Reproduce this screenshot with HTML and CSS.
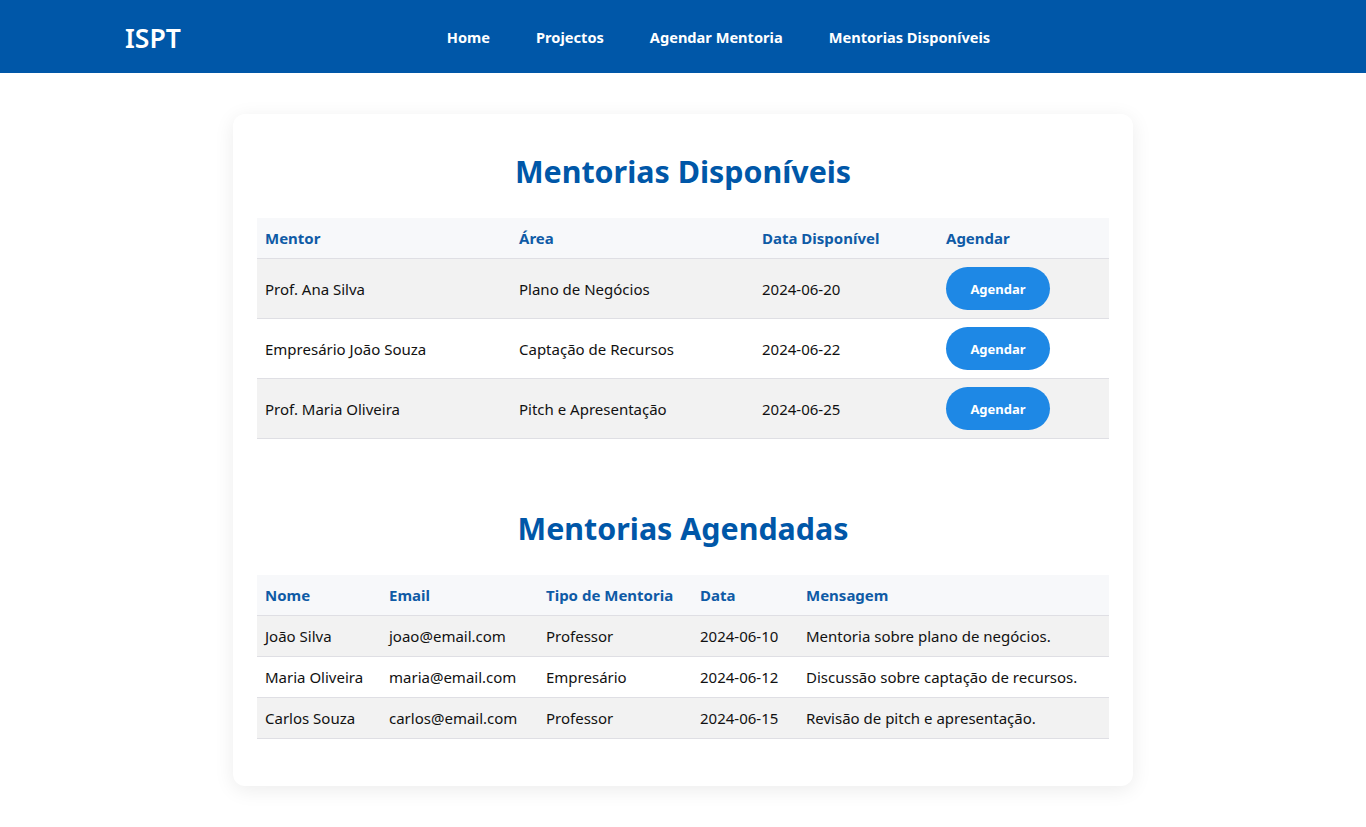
FILE: index.html
```html
<!DOCTYPE html>
<html lang="pt">
<head>
<meta charset="utf-8">
<title>ISPT - Mentorias Disponíveis</title>
<link rel="stylesheet" href="styles.css">
</head>
<body>
<header class="topbar">
  <div class="topbar-inner">
    <div class="logo">ISPT</div>
    <nav class="nav">
      <a href="#">Home</a>
      <a href="#">Projectos</a>
      <a href="#">Agendar Mentoria</a>
      <a href="#">Mentorias Disponíveis</a>
    </nav>
  </div>
</header>
<main class="page">
  <div class="card">
    <section class="section">
      <h2 class="title">Mentorias Disponíveis</h2>
      <table class="tbl tbl-avail">
        <colgroup><col class="c1"><col class="c2"><col class="c3"><col class="c4"></colgroup>
        <thead><tr><th>Mentor</th><th>Área</th><th>Data Disponível</th><th>Agendar</th></tr></thead>
        <tbody>
          <tr><td>Prof. Ana Silva</td><td>Plano de Negócios</td><td>2024-06-20</td><td><button class="btn">Agendar</button></td></tr>
          <tr><td>Empresário João Souza</td><td>Captação de Recursos</td><td>2024-06-22</td><td><button class="btn">Agendar</button></td></tr>
          <tr><td>Prof. Maria Oliveira</td><td>Pitch e Apresentação</td><td>2024-06-25</td><td><button class="btn">Agendar</button></td></tr>
        </tbody>
      </table>
    </section>
    <section class="section">
      <h2 class="title">Mentorias Agendadas</h2>
      <table class="tbl tbl-booked">
        <colgroup><col class="d1"><col class="d2"><col class="d3"><col class="d4"><col class="d5"></colgroup>
        <thead><tr><th>Nome</th><th>Email</th><th>Tipo de Mentoria</th><th>Data</th><th>Mensagem</th></tr></thead>
        <tbody>
          <tr><td>João Silva</td><td>joao@email.com</td><td>Professor</td><td>2024-06-10</td><td>Mentoria sobre plano de negócios.</td></tr>
          <tr><td>Maria Oliveira</td><td>maria@email.com</td><td>Empresário</td><td>2024-06-12</td><td>Discussão sobre captação de recursos.</td></tr>
          <tr><td>Carlos Souza</td><td>carlos@email.com</td><td>Professor</td><td>2024-06-15</td><td>Revisão de pitch e apresentação.</td></tr>
        </tbody>
      </table>
    </section>
  </div>
</main>
</body>
</html>
```
FILE: styles.css
```css
* { box-sizing: border-box; }
html, body {
  margin: 0;
  padding: 0;
  background: #ffffff;
  font-family: "Noto Sans", "Open Sans", sans-serif;
  color: #111;
}
.topbar {
  background: #0057a8;
  height: 73px;
}
.topbar-inner {
  height: 100%;
  padding: 0 125px;
  display: flex;
  align-items: center;
}
.logo {
  color: #fff;
  font-size: 26.5px;
  font-weight: 600;
  line-height: 1;
  width: 55px;
  padding-top: 3px;
}
.nav {
  flex: 1;
  display: flex;
  justify-content: center;
  gap: 46px;
  padding-left: 16px;
}
.nav a {
  color: #fff;
  text-decoration: none;
  font-weight: 700;
  font-size: 14.6px;
}
.page {
  padding: 41px 0 40px;
  display: flex;
  justify-content: center;
}
.card {
  width: 900px;
  background: #fff;
  border-radius: 12px;
  box-shadow: 0 4px 20px rgba(0, 0, 0, 0.08);
  padding: 24px;
}
.section { margin-bottom: 70px; }
.section:last-child { margin-bottom: 23px; }
.title {
  margin: 14px 0 26px;
  text-align: center;
  color: #0057a8;
  font-size: 30.4px;
  line-height: 40px;
  font-weight: 700;
}
.tbl {
  width: 100%;
  border-collapse: collapse;
  table-layout: fixed;
  font-size: 15px;
}
.tbl th {
  text-align: left;
  background: #f7f8fa;
  color: #0f5ba6;
  font-weight: 700;
  padding: 10px 8px;
  line-height: 20px;
  border-bottom: 1px solid #dfdfe4;
}
.tbl td {
  padding: 10px 8px;
  line-height: 20px;
  border-bottom: 1px solid #dfdfe4;
  color: #111;
}
.tbl tbody tr:nth-child(odd) td { background: #f2f2f2; }
.tbl-avail td { padding: 8px 8px; height: 60px; }
.c1 { width: 254px; }
.c2 { width: 243px; }
.c3 { width: 184px; }
.c4 { width: 171px; }
.d1 { width: 124px; }
.d2 { width: 157px; }
.d3 { width: 154px; }
.d4 { width: 106px; }
.d5 { width: 311px; }
.btn {
  background: #1e88e5;
  color: #fff;
  border: none;
  border-radius: 22px;
  width: 104px;
  height: 43px;
  font-family: inherit;
  font-weight: 700;
  font-size: 13px;
  cursor: pointer;
  display: block;
}
```
